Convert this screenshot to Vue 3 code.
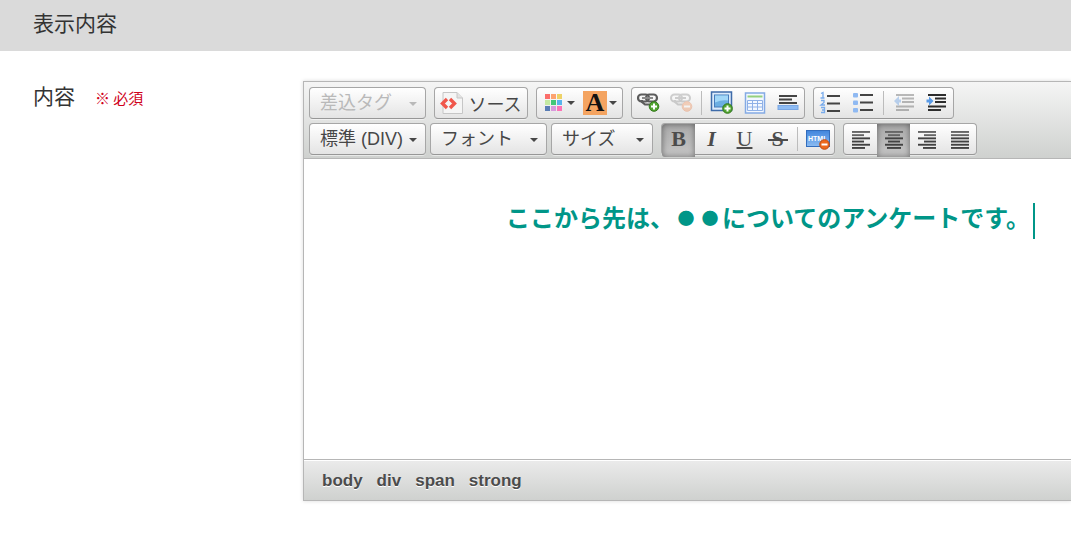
<script setup>
import { ref } from 'vue'

const bold = ref(true)
const align = ref('center')

const alignments = [
  { id: 'left', label: '左揃え', rows: [[3, 18], [3, 12], [3, 18], [3, 12], [3, 18], [3, 13]] },
  { id: 'center', label: '中央揃え', rows: [[3, 18], [6, 12], [3, 18], [6, 12], [3, 18], [5, 14]] },
  { id: 'right', label: '右揃え', rows: [[3, 18], [9, 12], [3, 18], [9, 12], [3, 18], [8, 13]] },
  { id: 'justify', label: '両端揃え', rows: [[3, 18], [3, 18], [3, 18], [3, 18], [3, 18], [3, 18]] }
]

const swatches = ['#fb6e6b', '#fda36f', '#edd267', '#c4e9a2', '#43c776', '#58b3ec', '#5a7db5', '#d999dc', '#fd73b6']
const path = ['body', 'div', 'span', 'strong']
</script>

<template>
  <main class="page">
    <h2 class="section-title">表示内容</h2>
    <div class="field">
      <div class="field-label">
        <span class="name">内容</span>
        <span class="required">※ 必須</span>
      </div>

      <section class="editor" aria-label="内容">
        <div class="toolbar" role="toolbar">
          <div class="row">
            <div class="combo tag disabled">
              <select aria-label="差込タグ" disabled><option>差込タグ</option></select>
            </div>
            <div class="group">
              <button type="button" class="source">
                <svg viewBox="0 0 24 24">
                  <path d="M3 1.500h14l5.500 5.500v15.500H3z" fill="#f5f5f5" stroke="#c6c6c6" />
                  <path d="M17 1.500V7h5.500" fill="#e3e3e3" stroke="#c6c6c6" />
                  <path d="M7 8L2.500 12.500l4.500 4.500M10 8l4.500 4.500L10 17" fill="none" stroke="#f0564b" stroke-width="3.400" />
                </svg>
                <span>ソース</span>
              </button>
            </div>
            <div class="group colors">
              <button type="button" class="drop" aria-label="文字色パレット">
                <svg viewBox="0 0 24 24">
                  <rect v-for="(c, i) in swatches" :key="c" :x="4 + (i % 3) * 6" :y="3 + Math.floor(i / 3) * 6" width="5" height="5" :fill="c" />
                </svg>
              </button>
              <button type="button" class="drop" aria-label="背景色">
                <span class="letter highlight">A</span>
              </button>
            </div>
            <div class="group">
              <button type="button" aria-label="リンク挿入">
                <svg viewBox="0 0 24 24">
                  <g fill="none" stroke="#5c5c5c" stroke-width="2.200">
                    <rect x="1" y="3.500" width="11" height="7" rx="3.500" />
                    <rect x="9" y="3.500" width="11" height="7" rx="3.500" />
                    <path d="M5 9v2l3 2.500h6" />
                  </g>
                  <path d="M5 7h11" stroke="#8a8a8a" stroke-width="2" />
                  <circle cx="17" cy="15.500" r="4.800" fill="#51a330" stroke="#34791b" />
                  <path d="M17 12.500v6M14 15.500h6" stroke="#fff" stroke-width="2" />
                </svg>
              </button>
              <button type="button" aria-label="リンク解除" disabled>
                <svg viewBox="0 0 24 24" class="faded">
                  <g fill="none" stroke="#777" stroke-width="2">
                    <rect x="1" y="3.500" width="11" height="7" rx="3.500" />
                    <rect x="9" y="3.500" width="11" height="7" rx="3.500" />
                    <path d="M5 9v2l3 2.500h6M5 7h11" />
                  </g>
                  <circle cx="17" cy="15.500" r="4.800" fill="#f28343" stroke="#e66a2c" />
                  <path d="M14 15.500h6" stroke="#fff" stroke-width="2" />
                </svg>
              </button>
              <i class="separator"></i>
              <button type="button" aria-label="画像">
                <svg viewBox="0 0 24 24">
                  <rect x="1.500" y="1" width="20" height="18.500" fill="#dbeafb" stroke="#3f6ba9" stroke-width="1.500" />
                  <rect x="4.500" y="4" width="14" height="12" fill="#6caee2" stroke="#477bba" />
                  <path d="M5 11.500q7-3 13-2v-5H5z" fill="#a2d7f8" />
                  <circle cx="17.500" cy="17.500" r="4.800" fill="#51a330" stroke="#34791b" />
                  <path d="M17.500 14.500v6M14.500 17.500h6" stroke="#fff" stroke-width="2" />
                </svg>
              </button>
              <button type="button" aria-label="表">
                <svg viewBox="0 0 24 24">
                  <rect x="2.500" y="2" width="19" height="20" fill="#f3f8ff" stroke="#84aae4" stroke-width="1.500" />
                  <path d="M4.500 5.500h15" stroke="#94d17d" stroke-width="2" />
                  <path d="M4.500 9.500h15v10h-15zM4.500 12.500h15M4.500 16h15M9.500 9.500v10M14.500 9.500v10" fill="none" stroke="#8fb1e7" />
                </svg>
              </button>
              <button type="button" aria-label="横罫線">
                <svg viewBox="0 0 24 24">
                  <path d="M3 5h18M3 8.500h13M3 12h18" stroke="#444" stroke-width="1.800" />
                  <rect x="2" y="14.500" width="20" height="4" fill="#8dbbf3" stroke="#79a6e3" />
                </svg>
              </button>
            </div>
            <div class="group">
              <button type="button" aria-label="番号付きリスト">
                <svg viewBox="0 0 24 24">
                  <path d="M8 5h13M8 12.500h13M8 20h13" stroke="#444" stroke-width="1.800" />
                  <path d="M2 2.500l2-1v5.500M1.500 7h4M2 9.500h3v2L2 14h4M2 16.500h3.500v5H2M3 19h2" fill="none" stroke="#78abec" stroke-width="1.300" />
                </svg>
              </button>
              <button type="button" aria-label="箇条書き">
                <svg viewBox="0 0 24 24">
                  <path d="M8 4h13M8 11.500h13M8 19h13" stroke="#444" stroke-width="1.800" />
                  <g fill="#8fb9f2">
                    <rect x="1" y="2" width="5" height="4.500" rx="1" />
                    <rect x="1" y="9.500" width="5" height="4.500" rx="1" />
                    <rect x="1" y="17" width="5" height="4.500" rx="1" />
                  </g>
                </svg>
              </button>
              <i class="separator"></i>
              <button type="button" aria-label="インデント解除" disabled>
                <svg viewBox="0 0 24 24" class="faded">
                  <path d="M4 4h18M10 7.500h12M10 11h12M4 15.500h18M4 19h13" stroke="#333" stroke-width="1.900" />
                  <path d="M2 10l5-5v3.500h2v3H7V15z" fill="#3b83dd" />
                </svg>
              </button>
              <button type="button" aria-label="インデント">
                <svg viewBox="0 0 24 24">
                  <path d="M3 4h18M10 7.500h11M10 11h11M3 15.500h18M3 19h13" stroke="#2d2d2d" stroke-width="2" />
                  <path d="M8.500 10L4 5.500v3H1.500v3H4v3z" fill="#5b9ce8" />
                </svg>
              </button>
            </div>
          </div>

          <div class="row">
            <div class="combos">
              <div class="combo tag">
                <select aria-label="段落の書式"><option>標準 (DIV)</option></select>
              </div>
              <div class="combo font">
                <select aria-label="フォント"><option>フォント</option></select>
              </div>
              <div class="combo size">
                <select aria-label="サイズ"><option>サイズ</option></select>
              </div>
            </div>
            <div class="group">
              <button type="button" aria-label="太字" :aria-pressed="bold" :class="{ pressed: bold }" @click="bold = !bold">
                <span class="letter">B</span>
              </button>
              <button type="button" aria-label="斜体"><span class="letter italic">I</span></button>
              <button type="button" aria-label="下線"><span class="letter underline">U</span></button>
              <button type="button" aria-label="打ち消し線"><span class="letter strike">S</span></button>
              <i class="separator"></i>
              <button type="button" aria-label="書式を解除">
                <svg viewBox="0 0 24 24">
                  <defs>
                    <linearGradient id="plate" x2="0" y2="1"><stop stop-color="#4085dd" /><stop offset="1" stop-color="#8cbcf2" /></linearGradient>
                  </defs>
                  <rect x=".500" y="3.500" width="23" height="16" fill="url(#plate)" stroke="#326dbd" />
                  <text x="2" y="14" class="plate-text">HTML</text>
                  <circle cx="18.500" cy="17.500" r="4.800" fill="#ed681b" stroke="#bd4b10" />
                  <path d="M15.500 17.500h6" stroke="#fff" stroke-width="2" />
                </svg>
              </button>
            </div>
            <div class="group">
              <button v-for="a in alignments" :key="a.id" type="button" :aria-label="a.label" :aria-pressed="align === a.id" :class="{ pressed: align === a.id }" @click="align = a.id">
                <svg viewBox="0 0 24 24">
                  <rect v-for="(r, i) in a.rows" :key="i" :x="r[0]" :y="4 + i * 3.2" :width="r[1]" height="1.9" :fill="i < 2 ? '#666' : '#424242'" />
                </svg>
              </button>
            </div>
          </div>
        </div>

        <div class="canvas">
          <p><strong>ここから先は、<span class="dot">●</span><span class="dot">●</span>についてのアンケートです。</strong><i class="caret"></i></p>
        </div>

        <nav class="path" aria-label="要素のパス">
          <a v-for="p in path" :key="p" href="#">{{ p }}</a>
        </nav>
      </section>
    </div>
  </main>
</template>

<style>
body {
  background: #fff;
  overflow: hidden;
}
</style>

<style scoped>
.page {
  font-family: "Liberation Sans", "Noto Sans CJK JP", sans-serif;
  color: #333;
}

.section-title {
  margin: 0;
  padding: 7px 33px 14px;
  background: #dadada;
  font-family: "Noto Sans CJK JP", sans-serif;
  font-size: 21px;
  font-weight: 400;
  line-height: 30px;
}

.field {
  display: grid;
  grid-template-columns: 270px minmax(0, 1fr);
  padding: 30px 0 42px 33px;
}

.field-label {
  display: flex;
  align-items: baseline;
  align-self: start;
  gap: 20px;
  font-family: "Noto Sans CJK JP", sans-serif;
  line-height: 28px;
}

.name {
  font-size: 21px;
}

.required {
  color: #d0021b;
  font-size: 15px;
}

.editor {
  border: 1px solid #b6b6b6;
  border-right: 0;
  box-shadow: 0 0 4px rgba(0, 0, 0, 0.15);
}

.toolbar {
  display: flex;
  flex-direction: column;
  gap: 4px;
  padding: 5px 0 3px 5px;
  border-bottom: 1px solid #b6b6b6;
  background: linear-gradient(#f5f5f5, #cfd1cf);
}

.row {
  display: flex;
  gap: 8px;
}

.combos {
  display: flex;
  gap: 4px;
}

.group,
.combo {
  display: flex;
  flex: none;
  box-sizing: border-box;
  height: 32px;
  border: 1px solid #a6a6a6;
  border-bottom-color: #979797;
  border-radius: 4px;
  background: linear-gradient(#fff, #e4e4e4);
  box-shadow: 0 1px 0 rgba(255, 255, 255, 0.5);
}

.combo {
  position: relative;
}

.combo.tag,
.combo.font {
  width: 117px;
}

.combo.size {
  width: 102px;
}

select {
  width: 100%;
  padding: 0 0 0 10px;
  appearance: none;
  border: 0;
  background: none;
  color: #474747;
  font: 18px "Liberation Sans", "Noto Sans CJK JP", sans-serif;
  opacity: 1;
}

.combo::after,
.drop::after {
  content: "";
  border: 4px solid transparent;
  border-top-color: #474747;
  border-bottom: 0;
}

.combo::after {
  position: absolute;
  top: 14px;
  right: 8px;
  pointer-events: none;
}

.disabled select {
  color: #b9b9b9;
}

.disabled::after {
  border-top-color: #b9b9b9;
}

button {
  display: flex;
  align-items: center;
  justify-content: center;
  width: 33px;
  padding: 0;
  border: 0;
  background: none;
  color: #474747;
}

button svg {
  flex: none;
  width: 24px;
  height: 24px;
}

.faded {
  opacity: 0.32;
}

.source {
  gap: 4px;
  width: 92px;
  font: 18px/24px "Noto Sans CJK JP", sans-serif;
}

.drop {
  gap: 2px;
  width: 42px;
}

.colors {
  padding-right: 1px;
}

.separator {
  width: 1px;
  margin: 3px;
  background: #bcbcbc;
}

.pressed {
  margin-bottom: -3px;
  padding-bottom: 3px;
  background: linear-gradient(#aaa, #c6c6c6);
  box-shadow: inset 0 0 6px rgba(0, 0, 0, 0.45);
}

.pressed:first-child {
  border-radius: 3px 0 0 3px;
}

.letter {
  position: relative;
  width: 24px;
  color: #4c4c4c;
  font: bold 22px/24px "Liberation Serif", serif;
  text-align: center;
}

.highlight {
  background: #f4a461;
  color: #111;
  font-size: 26px;
}

.italic {
  font-style: italic;
}

.underline {
  font-weight: 400;
  text-decoration: underline 2px;
}

.strike::after {
  content: "";
  position: absolute;
  top: 12px;
  left: 2px;
  right: 2px;
  height: 2px;
  background: #4c4c4c;
}

.plate-text {
  fill: #fff;
  font: bold 7px "Liberation Sans", sans-serif;
}

.canvas {
  box-sizing: border-box;
  min-height: 300px;
  padding: 44px 0 0 166px;
  background: #fff;
}

.canvas p {
  display: flex;
  align-items: flex-start;
  justify-content: center;
  margin: 0;
  color: #009688;
  font-family: "Noto Sans CJK JP", sans-serif;
  font-size: 24px;
  line-height: 28px;
  white-space: nowrap;
}

.dot {
  display: inline-block;
  width: 24px;
  font-size: 17px;
  text-align: center;
  vertical-align: 2px;
  line-height: 20px;
}

.caret {
  width: 2px;
  height: 36px;
  margin-left: 3px;
  background: #009688;
}

.path {
  display: flex;
  gap: 14px;
  padding: 9px 18px 7px;
  border-top: 1px solid #b6b6b6;
  background: linear-gradient(#ebebeb, #cfd1cf);
  box-shadow: inset 0 1px 0 #fff;
}

.path a {
  color: #4c4c4c;
  font-size: 17px;
  font-weight: 700;
  line-height: 24px;
  text-decoration: none;
  text-shadow: 0 1px 0 #fff;
}
</style>
